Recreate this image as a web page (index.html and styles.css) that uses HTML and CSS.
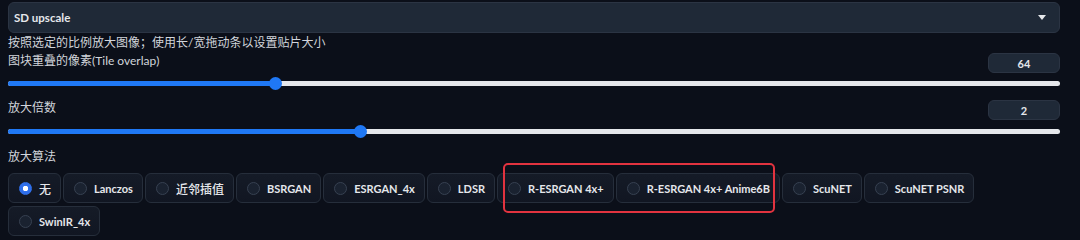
FILE: index.html
```html
<!DOCTYPE html>
<html lang="zh">
<head>
<meta charset="utf-8">
<link rel="stylesheet" href="styles.css">
</head>
<body>
<div class="page">
  <div class="dropdown">
    <span class="dd-value">SD upscale</span>
    <svg class="dd-arrow" width="8" height="5" viewBox="0 0 8 5"><path d="M0 0H8L4 5Z" fill="#e5e7eb"/></svg>
  </div>
  <div class="desc">按照选定的比例放大图像；使用长/宽拖动条以设置贴片大小</div>

  <div class="slider-block first">
    <div class="slider-head">
      <span class="label">图块重叠的像素(Tile overlap)</span>
      <span class="numbox">64</span>
    </div>
    <div class="track">
      <div class="fill" style="width:267px"></div>
      <div class="thumb" style="left:261px"></div>
    </div>
  </div>

  <div class="slider-block second">
    <div class="slider-head">
      <span class="label">放大倍数</span>
      <span class="numbox">2</span>
    </div>
    <div class="track">
      <div class="fill" style="width:352px"></div>
      <div class="thumb" style="left:346px"></div>
    </div>
  </div>

  <div class="label algo">放大算法</div>
  <div class="radios">
    <label class="item"><span class="dot on"></span><span class="cjk">无</span></label>
    <label class="item"><span class="dot"></span>Lanczos</label>
    <label class="item"><span class="dot"></span><span class="cjk">近邻插值</span></label>
    <label class="item"><span class="dot"></span>BSRGAN</label>
    <label class="item"><span class="dot"></span>ESRGAN_4x</label>
    <label class="item"><span class="dot"></span>LDSR</label>
    <label class="item"><span class="dot"></span>R-ESRGAN 4x+</label>
    <label class="item"><span class="dot"></span>R-ESRGAN 4x+ Anime6B</label>
    <label class="item"><span class="dot"></span>ScuNET</label>
    <label class="item"><span class="dot"></span>ScuNET PSNR</label>
    <label class="item"><span class="dot"></span>SwinIR_4x</label>
    <div class="highlight"></div>
  </div>
</div>
</body>
</html>
```
FILE: styles.css
```css
html, body {
  margin: 0;
  padding: 0;
  background: #0b0f19;
}
body {
  font-family: Lato, "Noto Sans CJK SC", sans-serif;
  color: #d1d5db;
  width: 1080px;
  height: 240px;
  overflow: hidden;
}
.page {
  width: 1052px;
  padding: 2px 0 0 8px;
}
.dropdown {
  height: 29px;
  border: 1px solid #2b3443;
  border-radius: 6px;
  background: #1f2937;
  display: flex;
  align-items: center;
  justify-content: space-between;
  padding: 0 13px 0 5px;
}
.dd-value {
  font-size: 11.5px;
  font-weight: 700;
  color: #e5e7eb;
}
.dd-arrow {
  display: block;
}
.desc {
  margin-top: 2px;
  font-size: 12px;
  line-height: 16px;
  color: #d1d5db;
}
.label {
  font-size: 12px;
  line-height: 16px;
  color: #d1d5db;
}
.slider-block.first {
  margin-top: 2px;
}
.slider-block.second {
  margin-top: 14px;
}
.slider-head {
  display: flex;
  justify-content: space-between;
  align-items: flex-start;
  height: 20px;
}
.numbox {
  width: 70px;
  height: 18px;
  border: 1px solid #2b3443;
  border-radius: 6px;
  background: #1f2937;
  color: #e5e7eb;
  font-size: 11px;
  font-weight: 700;
  display: flex;
  align-items: center;
  justify-content: center;
}
.track {
  position: relative;
  margin-top: 8px;
  height: 5px;
  border-radius: 3px;
  background: #e5e7eb;
  margin-bottom: 5px;
}
.second .track {
  margin-top: 9px;
}
.fill {
  height: 5px;
  border-radius: 3px;
  background: #1f78f5;
}
.thumb {
  position: absolute;
  top: -4px;
  width: 13px;
  height: 13px;
  border-radius: 50%;
  background: #1f78f5;
}
.algo {
  margin-top: 15px;
}
.radios {
  position: relative;
  margin-top: 8px;
  display: flex;
  flex-wrap: wrap;
  column-gap: 2px;
  row-gap: 3px;
}
.item {
  box-sizing: border-box;
  height: 30px;
  display: flex;
  align-items: center;
  padding: 0 9px 0 10px;
  border: 1px solid #262e3b;
  border-radius: 6px;
  background: linear-gradient(#151b27, #111622);
  color: #e5e7eb;
  font-size: 11px;
  font-weight: 700;
  white-space: nowrap;
}
.cjk {
  font-size: 12px;
  font-weight: 500;
}
.dot {
  box-sizing: border-box;
  width: 13px;
  height: 13px;
  border-radius: 50%;
  border: 1px solid #374151;
  background: #1a2230;
  margin-right: 7px;
  flex: none;
}
.dot.on {
  border-color: #2f6fea;
  background: radial-gradient(circle, #ffffff 0 2.5px, #2f6fea 3px);
}
.highlight {
  position: absolute;
  left: 495px;
  top: -10px;
  width: 272px;
  height: 50px;
  box-sizing: border-box;
  border: 2.5px solid #e2333f;
  border-radius: 5px;
  pointer-events: none;
}
```
